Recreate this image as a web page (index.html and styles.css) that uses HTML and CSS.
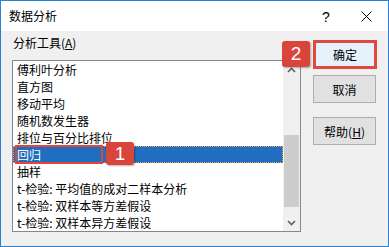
FILE: index.html
```html
<!DOCTYPE html>
<html lang="zh-CN">
<head>
    <meta charset="UTF-8">
    <meta name="viewport" content="width=device-width, initial-scale=1.0">
    <title>数据分析</title>
    <link rel="stylesheet" href="styles.css">
</head>
<body>
    <div class="dialog">
        <div class="titlebar">
            <span class="title">数据分析</span>
            <span class="help">?</span>
            <svg class="close" width="11" height="11" viewBox="0 0 11 11">
                <path d="M0.5 0.5 L10.5 10.5 M10.5 0.5 L0.5 10.5" stroke="#000" stroke-width="1" fill="none"/>
            </svg>
        </div>
        <div class="content">
            <div class="tools">
                <div class="label">分析工具(<u>A</u>)</div>
                <div class="listbox">
                    <ul class="items">
                        <li>傅利叶分析</li>
                        <li>直方图</li>
                        <li>移动平均</li>
                        <li>随机数发生器</li>
                        <li>排位与百分比排位</li>
                        <li class="selected">回归<span class="mark"></span></li>
                        <li>抽样</li>
                        <li>t-检验: 平均值的成对二样本分析</li>
                        <li>t-检验: 双样本等方差假设</li>
                        <li>t-检验: 双样本异方差假设</li>
                    </ul>
                    <div class="scrollbar">
                        <div class="arrow">
                            <svg width="9" height="6" viewBox="0 0 9 6"><path d="M1 5 L4.5 1.5 L8 5" stroke="#606060" stroke-width="1.6" fill="none"/></svg>
                        </div>
                        <div class="track"><div class="thumb"></div></div>
                        <div class="arrow">
                            <svg width="9" height="6" viewBox="0 0 9 6"><path d="M1 1 L4.5 4.5 L8 1" stroke="#606060" stroke-width="1.6" fill="none"/></svg>
                        </div>
                    </div>
                </div>
            </div>
            <div class="buttons">
                <button class="btn primary">确定</button>
                <button class="btn">取消</button>
                <button class="btn help-btn">帮助(<u>H</u>)</button>
            </div>
            <div class="badge badge-one">1</div>
            <div class="badge badge-two">2</div>
        </div>
    </div>
</body>
</html>
```

FILE: styles.css
```css
* {
    box-sizing: border-box;
}

body {
    margin: 0;
    padding: 0;
    background-color: #ffffff;
    font-family: "Noto Sans CJK SC", "Liberation Sans", sans-serif;
    font-size: 12px;
    color: #000;
}

.dialog {
    width: 389px;
    height: 247px;
    border: 1px solid #2a80d2;
    display: flex;
    flex-direction: column;
    position: relative;
}

.titlebar {
    height: 30px;
    background-color: #ffffff;
    display: flex;
    align-items: center;
    padding-left: 8px;
}

.title {
    flex: 1;
    line-height: 16px;
}

.help {
    font-family: "Liberation Sans", sans-serif;
    font-size: 14px;
    width: 39px;
    margin-top: 1px;
}

.close {
    margin-right: 16px;
}

.content {
    flex: 1;
    background-color: #f0f0f0;
    display: flex;
    position: relative;
}

.tools {
    margin-left: 11px;
    display: flex;
    flex-direction: column;
}

.label {
    padding-top: 3px;
    line-height: 18px;
    padding-left: 1px;
}

.label u, .help-btn u {
    text-underline-offset: 1px;
}

.listbox {
    margin-top: 8px;
    width: 289px;
    height: 172px;
    border: 1px solid #828790;
    background-color: #ffffff;
    display: flex;
}

.items {
    list-style: none;
    margin: 0;
    padding: 0;
    flex: 1;
}

.items li {
    height: 17px;
    line-height: 17px;
    padding-left: 4px;
    white-space: nowrap;
}

.items li.selected {
    background-color: #1f6ebf;
    color: #ffffff;
    outline: 1px dotted #e8a04a;
    outline-offset: -1px;
    position: relative;
}

.mark {
    position: absolute;
    left: 2px;
    top: -1px;
    width: 88px;
    height: 19px;
    border: 2px solid #e4453b;
}

.scrollbar {
    width: 17px;
    background-color: #f0f0f0;
    display: flex;
    flex-direction: column;
}

.arrow {
    height: 17px;
    display: flex;
    align-items: center;
    justify-content: center;
}

.track {
    flex: 1;
}

.thumb {
    margin: 57px 1px 0 1px;
    height: 72px;
    background-color: #cdcdcd;
}

.buttons {
    margin-left: 12px;
    padding-top: 10px;
    display: flex;
    flex-direction: column;
    gap: 6px;
}

.btn {
    width: 63px;
    height: 28px;
    border: 1px solid #adadad;
    background-color: #e1e1e1;
    font-family: "Noto Sans CJK SC", "Liberation Sans", sans-serif;
    font-size: 12px;
    color: #000;
    padding: 0;
}

.btn.primary {
    width: 64px;
    height: 29px;
    margin-top: -1px;
    border: 3px solid #df4a3f;
    background-color: #e5f1fb;
}

.help-btn {
    margin-top: 8px;
}

.badge {
    position: absolute;
    background-color: #d9443b;
    color: #ffffff;
    font-family: "Liberation Sans", sans-serif;
    font-size: 19px;
    border-radius: 3px;
    display: flex;
    align-items: center;
    justify-content: center;
    box-shadow: 1px 1px 2px rgba(0, 0, 0, 0.3);
}

.badge-one {
    left: 105px;
    top: 111px;
    width: 28px;
    height: 23px;
}

.badge-two {
    left: 281px;
    top: 10px;
    width: 28px;
    height: 26px;
}
```
